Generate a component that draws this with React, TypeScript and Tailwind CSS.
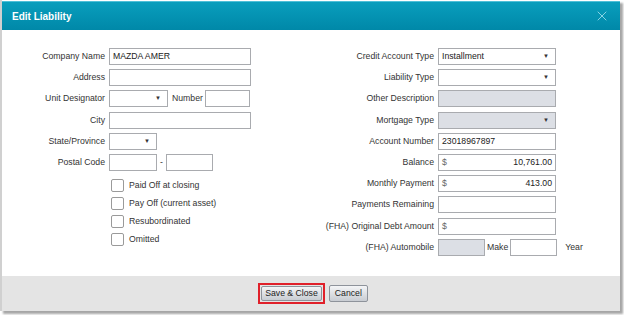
import { X } from 'lucide-react'

const font = { fontFamily: '"Liberation Sans", Arial, sans-serif' }

function Label({ text, w }: { text: string; w: string }) {
  return <span className={`${w} shrink-0 pr-[4px] text-right text-[8.7px] text-[#333]`}>{text}</span>
}

function Box({ w, value = '', disabled = false, right = false, dollar = false }: { w: string; value?: string; disabled?: boolean; right?: boolean; dollar?: boolean }) {
  return (
    <div className={`${w} flex h-[17px] items-center border border-[#a9abaf] px-[3px] text-[8.7px] text-[#222] ${disabled ? 'bg-[#dcdfe5]' : 'bg-white'}`}>
      {dollar && <span className="text-[#666]">$</span>}
      <span className={right ? 'ml-auto' : ''}>{value}</span>
    </div>
  )
}

function Select({ w, value = '', disabled = false }: { w: string; value?: string; disabled?: boolean }) {
  return (
    <div className={`${w} flex h-[17px] items-center border border-[#a9abaf] px-[3px] text-[8.7px] text-[#222] ${disabled ? 'bg-[#dcdfe5]' : 'bg-white'}`}>
      <span>{value}</span>
      <span className="ml-auto pr-[3px] text-[6px] text-[#333]">▼</span>
    </div>
  )
}

function Check({ text }: { text: string }) {
  return (
    <div className="flex h-[18px] items-center pl-[109px]">
      <div className="h-[13px] w-[13px] rounded-[2px] border border-[#9a9a9a] bg-white" />
      <span className="pl-[5px] text-[8.7px] text-[#333]">{text}</span>
    </div>
  )
}

const row = 'flex h-[21.2px] items-center'

export default function App() {
  return (
    <div className="h-[315px] w-[624px] overflow-hidden bg-white" style={font}>
      <div className="h-[311px] w-[620px] border-l-2 border-[#d0d0d0] pt-[1px] shadow-[3px_3px_2px_rgba(0,0,0,0.35)]">
        <div className="flex h-[29px] items-center border-t border-[#4fc0d8] bg-gradient-to-b from-[#0a9ebd] to-[#0088a8] pl-[10px] pr-[10px]">
          <span className="text-[10px] font-bold text-white">Edit Liability</span>
          <X className="ml-auto h-[16px] w-[16px] text-[#a9e3f0]" strokeWidth={1.2} />
        </div>
        <div className="flex h-[246px] bg-white pt-[16px]">
          <div className="w-[298px]">
            <div className={row}>
              <Label text="Company Name" w="w-[107px]" />
              <Box w="w-[142px]" value="MAZDA AMER" />
            </div>
            <div className={row}>
              <Label text="Address" w="w-[107px]" />
              <Box w="w-[142px]" />
            </div>
            <div className={row}>
              <Label text="Unit Designator" w="w-[107px]" />
              <Select w="w-[59px]" />
              <span className="pl-[4px] pr-[2px] text-[8.7px] text-[#333]">Number</span>
              <Box w="w-[45px]" />
            </div>
            <div className={row}>
              <Label text="City" w="w-[107px]" />
              <Box w="w-[142px]" />
            </div>
            <div className={row}>
              <Label text="State/Province" w="w-[107px]" />
              <Select w="w-[48px]" />
            </div>
            <div className={row}>
              <Label text="Postal Code" w="w-[107px]" />
              <Box w="w-[48px]" />
              <span className="px-[3px] text-[8.7px] text-[#333]">-</span>
              <Box w="w-[47px]" />
            </div>
            <div className="mt-[3px]">
              <Check text="Paid Off at closing" />
              <Check text="Pay Off (current asset)" />
              <Check text="Resubordinated" />
              <Check text="Omitted" />
            </div>
          </div>
          <div className="flex-1">
            <div className={row}>
              <Label text="Credit Account Type" w="w-[138px]" />
              <Select w="w-[118px]" value="Installment" />
            </div>
            <div className={row}>
              <Label text="Liability Type" w="w-[138px]" />
              <Select w="w-[118px]" />
            </div>
            <div className={row}>
              <Label text="Other Description" w="w-[138px]" />
              <Box w="w-[118px]" disabled />
            </div>
            <div className={row}>
              <Label text="Mortgage Type" w="w-[138px]" />
              <Select w="w-[118px]" disabled />
            </div>
            <div className={row}>
              <Label text="Account Number" w="w-[138px]" />
              <Box w="w-[118px]" value="23018967897" />
            </div>
            <div className={row}>
              <Label text="Balance" w="w-[138px]" />
              <Box w="w-[118px]" value="10,761.00" right dollar />
            </div>
            <div className={row}>
              <Label text="Monthly Payment" w="w-[138px]" />
              <Box w="w-[118px]" value="413.00" right dollar />
            </div>
            <div className={row}>
              <Label text="Payments Remaining" w="w-[138px]" />
              <Box w="w-[118px]" />
            </div>
            <div className={row}>
              <Label text="(FHA) Original Debt Amount" w="w-[138px]" />
              <Box w="w-[118px]" dollar />
            </div>
            <div className={row}>
              <Label text="(FHA) Automobile" w="w-[138px]" />
              <Box w="w-[47px]" disabled />
              <span className="pl-[2px] pr-[2px] text-[8.7px] text-[#333]">Make</span>
              <Box w="w-[47px]" />
              <span className="pl-[8px] text-[8.7px] text-[#333]">Year</span>
            </div>
          </div>
        </div>
        <div className="flex h-[35px] items-center justify-center gap-[4px] bg-[#e4e4e4] pl-[4px]">
          <div className="flex border-2 border-[#e0202a] p-[1px]">
            <button className="h-[15px] rounded-[2px] border border-[#8e939b] bg-gradient-to-b from-[#f4f5f7] to-[#c8ccd2] px-[3px] text-[8.7px] leading-none text-[#222]">
              Save &amp; Close
            </button>
          </div>
          <button className="h-[17px] rounded-[2px] border border-[#8e939b] bg-gradient-to-b from-[#f4f5f7] to-[#c8ccd2] px-[5px] text-[8.7px] leading-none text-[#222]">
            Cancel
          </button>
        </div>
      </div>
    </div>
  )
}
